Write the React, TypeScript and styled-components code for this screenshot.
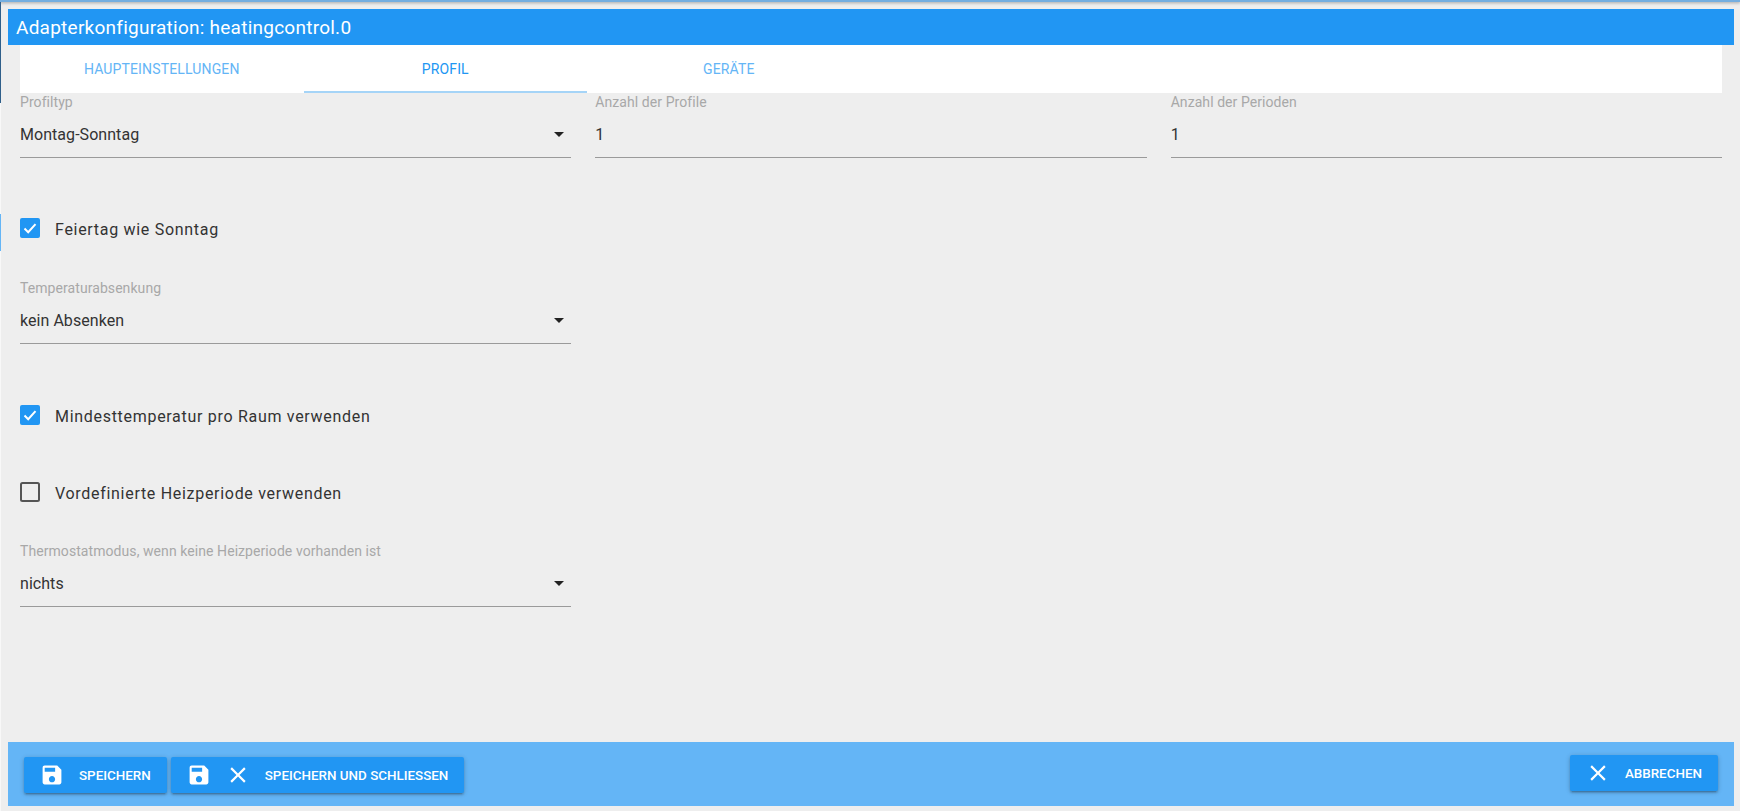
import { FC } from "react";
import styled, { createGlobalStyle } from "styled-components";

const GlobalStyle = createGlobalStyle`
  html, body {
    margin: 0;
    padding: 0;
    height: 100%;
    background: #eeeeee;
    font-family: Roboto, "Noto Sans", sans-serif;
  }
`;

const Page = styled.div`
  display: flex;
  flex-direction: column;
  height: 811px;
  overflow: hidden;
  background: #eeeeee;
`;

const TopStrip = styled.div`
  flex: none;
  height: 2px;
  background: #74aee0;
  box-shadow: 0 1px 3px rgba(0, 0, 0, 0.35);
`;

const Body = styled.div`
  flex: 1;
  display: flex;
  min-height: 0;
`;

const Rail = styled.div`
  flex: none;
  width: 1px;
  display: flex;
  flex-direction: column;
  background: #f8f8f8;
`;

const RailDark = styled.div`
  height: 101px;
  background: #2f5f8a;
`;

const RailAccent = styled.div`
  height: 37px;
  margin-top: 111px;
  background: #64b5f6;
`;

const Main = styled.div`
  flex: 1;
  display: flex;
  flex-direction: column;
  min-width: 0;
  margin: 7px 6px 5px 7px;
`;

const TitleBar = styled.div`
  flex: none;
  height: 36px;
  display: flex;
  align-items: center;
  padding-left: 8px;
  background: #2196f3;
  color: #fff;
  font-size: 19px;
  letter-spacing: 0.25px;
`;

const TabBar = styled.div`
  flex: none;
  height: 48px;
  display: flex;
  margin: 0 12px;
  background: #fff;
`;

const Tab = styled.div<{ $active?: boolean }>`
  width: 283.5px;
  box-sizing: border-box;
  display: flex;
  align-items: center;
  justify-content: center;
  padding-top: 2px;
  font-size: 14px;
  letter-spacing: 0.15px;
  text-transform: uppercase;
  color: ${({ $active }) => ($active ? "#2196f3" : "#64b5f6")};
  border-bottom: 2px solid ${({ $active }) => ($active ? "#a5d4f7" : "transparent")};
`;

const Content = styled.div`
  flex: 1;
  min-height: 0;
  padding: 0 12px;
`;

const Columns = styled.div`
  display: grid;
  grid-template-columns: repeat(3, 1fr);
  column-gap: 24px;
`;

const Row = styled.div<{ $top: number }>`
  margin-top: ${({ $top }) => $top}px;
`;

const HalfColumn = styled.div`
  width: 551px;
`;

const FieldBox = styled.div`
  height: 65px;
  display: flex;
  flex-direction: column;
`;

const FieldLabel = styled.div`
  flex: none;
  height: 18px;
  line-height: 18px;
  font-size: 14px;
  letter-spacing: 0.07px;
  color: #a8a8a8;
`;

const FieldValue = styled.div`
  flex: 1;
  display: flex;
  align-items: center;
  justify-content: space-between;
  border-bottom: 1px solid #9a9a9a;
  font-size: 16px;
  letter-spacing: 0.05px;
  color: #333;
`;

const Arrow = styled.svg`
  width: 24px;
  height: 24px;
  fill: #222;
`;

const CheckRow = styled.div`
  display: flex;
  align-items: center;
  height: 20px;
  gap: 15px;
`;

const CheckLabel = styled.span`
  padding-top: 2px;
  font-size: 16px;
  letter-spacing: 0.7px;
  color: #333;
`;

const CheckIcon = styled.svg`
  flex: none;
  width: 20px;
  height: 20px;
`;

const Footer = styled.div`
  flex: none;
  height: 64px;
  display: flex;
  justify-content: space-between;
  padding: 0 16px;
  background: #64b5f6;
`;

const LeftActions = styled.div`
  display: flex;
  gap: 4px;
  padding-top: 15px;
`;

const RightActions = styled.div`
  padding-top: 13px;
`;

const ActionButton = styled.button`
  height: 36px;
  display: flex;
  align-items: center;
  padding: 0 16px;
  border: none;
  border-radius: 2px;
  background: #2196f3;
  color: #fff;
  font-family: inherit;
  font-size: 13.4px;
  font-weight: 500;
  text-transform: uppercase;
  box-shadow: 0 1px 5px rgba(0, 0, 0, 0.2), 0 2px 2px rgba(0, 0, 0, 0.14), 0 3px 1px -2px rgba(0, 0, 0, 0.12);
`;

const ButtonIcon = styled.svg`
  flex: none;
  width: 24px;
  height: 24px;
  fill: #fff;
  margin-right: 15px;
`;

const SaveIcon: FC = () => (
  <ButtonIcon viewBox="0.5 0.5 23 23">
    <path d="M17 3H5c-1.11 0-2 .9-2 2v14c0 1.1.89 2 2 2h14c1.1 0 2-.9 2-2V7l-4-4zm-5 16c-1.66 0-3-1.34-3-3s1.34-3 3-3 3 1.34 3 3-1.34 3-3 3zm3-10H5V5h10v4z" />
  </ButtonIcon>
);

const CloseIcon: FC = () => (
  <ButtonIcon viewBox="1 1 22 22">
    <path d="M19 6.41L17.59 5 12 10.59 6.41 5 5 6.41 10.59 12 5 17.59 6.41 19 12 13.41 17.59 19 19 17.59 13.41 12z" />
  </ButtonIcon>
);

const Checkbox: FC<{ checked?: boolean }> = ({ checked }) => (
  <CheckIcon viewBox="0 0 20 20">
    {checked ? (
      <>
        <rect width="20" height="20" rx="2" fill="#2196f3" />
        <path d="M4.5 10.5l3.7 3.7 7.3-8" fill="none" stroke="#fff" strokeWidth="2" />
      </>
    ) : (
      <rect x="1" y="1" width="18" height="18" rx="1.5" fill="none" stroke="#555" strokeWidth="2" />
    )}
  </CheckIcon>
);

const Field: FC<{ label: string; value: string; select?: boolean }> = ({ label, value, select }) => (
  <FieldBox>
    <FieldLabel>{label}</FieldLabel>
    <FieldValue>
      {value}
      {select && (
        <Arrow viewBox="0 0 24 24">
          <path d="M7 10l5 5 5-5z" />
        </Arrow>
      )}
    </FieldValue>
  </FieldBox>
);

const App: FC = () => (
  <Page>
    <GlobalStyle />
    <TopStrip />
    <Body>
      <Rail>
        <RailDark />
        <RailAccent />
      </Rail>
      <Main>
        <TitleBar>Adapterkonfiguration: heatingcontrol.0</TitleBar>
        <TabBar>
          <Tab>Haupteinstellungen</Tab>
          <Tab $active>Profil</Tab>
          <Tab>Geräte</Tab>
        </TabBar>
        <Content>
          <Columns>
            <Field label="Profiltyp" value="Montag-Sonntag" select />
            <Field label="Anzahl der Profile" value="1" />
            <Field label="Anzahl der Perioden" value="1" />
          </Columns>
          <Row $top={60}>
            <CheckRow>
              <Checkbox checked />
              <CheckLabel>Feiertag wie Sonntag</CheckLabel>
            </CheckRow>
          </Row>
          <Row $top={41}>
            <HalfColumn>
              <Field label="Temperaturabsenkung" value="kein Absenken" select />
            </HalfColumn>
          </Row>
          <Row $top={61}>
            <CheckRow>
              <Checkbox checked />
              <CheckLabel>Mindesttemperatur pro Raum verwenden</CheckLabel>
            </CheckRow>
          </Row>
          <Row $top={57}>
            <CheckRow>
              <Checkbox />
              <CheckLabel>Vordefinierte Heizperiode verwenden</CheckLabel>
            </CheckRow>
          </Row>
          <Row $top={40}>
            <HalfColumn>
              <Field label="Thermostatmodus, wenn keine Heizperiode vorhanden ist" value="nichts" select />
            </HalfColumn>
          </Row>
        </Content>
        <Footer>
          <LeftActions>
            <ActionButton>
              <SaveIcon />
              Speichern
            </ActionButton>
            <ActionButton>
              <SaveIcon />
              <CloseIcon />
              Speichern und schliessen
            </ActionButton>
          </LeftActions>
          <RightActions>
            <ActionButton>
              <CloseIcon />
              Abbrechen
            </ActionButton>
          </RightActions>
        </Footer>
      </Main>
    </Body>
  </Page>
);

export default App;
